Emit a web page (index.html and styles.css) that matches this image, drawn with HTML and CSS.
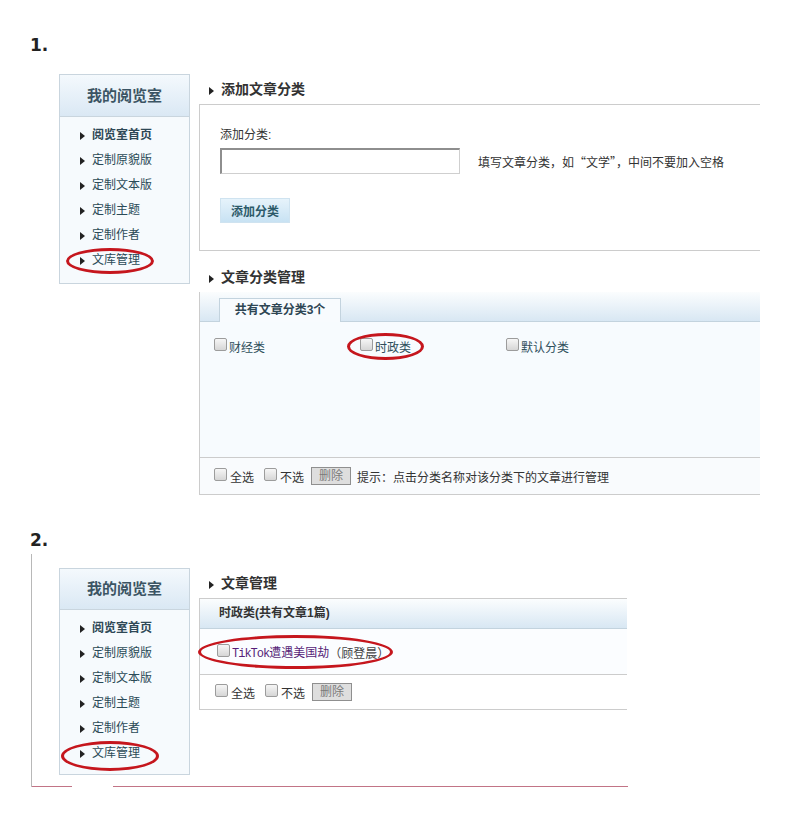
FILE: index.html
```html
<!DOCTYPE html>
<html lang="zh-CN">
<head>
    <meta charset="UTF-8">
    <meta name="viewport" content="width=device-width, initial-scale=1.0">
    <title>我的阅览室 - 文库管理</title>
    <link rel="stylesheet" href="styles.css">
</head>
<body>
<div class="page">

    <div class="step">1.</div>
    <div class="panel">
        <aside class="side">
            <div class="side-head">我的阅览室</div>
            <ul class="side-menu">
                <li class="current"><i class="arrow"></i>阅览室首页</li>
                <li><i class="arrow"></i>定制原貌版</li>
                <li><i class="arrow"></i>定制文本版</li>
                <li><i class="arrow"></i>定制主题</li>
                <li><i class="arrow"></i>定制作者</li>
                <li><i class="arrow"></i>文库管理<span class="ring ring-menu"></span></li>
            </ul>
        </aside>

        <div class="main main-wide">
            <h3 class="sec-title"><i class="arrow"></i>添加文章分类</h3>
            <div class="box add-box">
                <div class="field-label">添加分类:</div>
                <div class="field-row">
                    <input type="text" class="field-input">
                    <span class="field-hint">填写文章分类，如“文学”，中间不要加入空格</span>
                </div>
                <button class="add-button">添加分类</button>
            </div>

            <h3 class="sec-title sec-gap"><i class="arrow"></i>文章分类管理</h3>
            <div class="box cat-box">
                <div class="tab-bar">
                    <span class="tab">共有文章分类3个</span>
                </div>
                <div class="cat-list">
                    <label class="check-item"><input type="checkbox" class="check">财经类</label>
                    <label class="check-item"><input type="checkbox" class="check">时政类<span class="ring ring-cat"></span></label>
                    <label class="check-item"><input type="checkbox" class="check">默认分类</label>
                </div>
                <div class="box-foot">
                    <label class="foot-item"><input type="checkbox" class="check">全选</label>
                    <label class="foot-item"><input type="checkbox" class="check">不选</label>
                    <button class="del-button">删除</button>
                    <span class="foot-tip">提示：点击分类名称对该分类下的文章进行管理</span>
                </div>
            </div>
        </div>
    </div>

    <div class="step step-two">2.</div>
    <div class="frame">
        <div class="panel">
            <aside class="side">
                <div class="side-head">我的阅览室</div>
                <ul class="side-menu">
                    <li class="current"><i class="arrow"></i>阅览室首页</li>
                    <li><i class="arrow"></i>定制原貌版</li>
                    <li><i class="arrow"></i>定制文本版</li>
                    <li><i class="arrow"></i>定制主题</li>
                    <li><i class="arrow"></i>定制作者</li>
                    <li><i class="arrow"></i>文库管理<span class="ring ring-menu-2"></span></li>
                </ul>
            </aside>

            <div class="main main-narrow">
                <h3 class="sec-title"><i class="arrow"></i>文章管理</h3>
                <div class="box art-box">
                    <div class="art-head">时政类(共有文章1篇)</div>
                    <div class="art-row">
                        <input type="checkbox" class="check">
                        <a class="art-link"><span class="latin">TikTok</span>遭遇美国劫</a>
                        <span class="art-author">（顾登晨）</span>
                        <span class="ring ring-art"></span>
                    </div>
                    <div class="box-foot art-foot">
                        <label class="foot-item"><input type="checkbox" class="check">全选</label>
                        <label class="foot-item"><input type="checkbox" class="check">不选</label>
                        <button class="del-button">删除</button>
                    </div>
                </div>
            </div>
        </div>
        <div class="frame-line">
            <span class="seg seg-a"></span>
            <span class="seg seg-b"></span>
        </div>
    </div>

</div>
</body>
</html>
```

FILE: styles.css
```css
body {
    margin: 0;
    background-color: #fff;
    font-family: 'Liberation Sans', 'Noto Sans CJK SC', sans-serif;
    font-size: 12px;
    color: #333;
}

.page {
    padding: 35px 0 0 30px;
}

.step {
    font-family: 'DejaVu Sans', sans-serif;
    font-weight: bold;
    font-size: 17px;
    line-height: 21px;
    color: #222;
    margin-bottom: 18px;
}

.step-two {
    margin-top: 35px;
    margin-bottom: 3px;
}

.panel {
    display: flex;
    align-items: flex-start;
    margin-left: 29px;
}

/* sidebar */
.side {
    width: 131px;
    flex-shrink: 0;
    box-sizing: border-box;
    border: 1px solid #c9d5de;
    background-color: #f6fafd;
}

.side-head {
    height: 41px;
    line-height: 41px;
    text-align: center;
    font-size: 15px;
    font-weight: bold;
    color: #3b5463;
    background: linear-gradient(#f4f9fd, #dae8f4);
    border-bottom: 1px solid #c9d5de;
}

.side-menu {
    list-style: none;
    margin: 0;
    padding: 6px 0 10px;
}

.side-menu li {
    position: relative;
    height: 25px;
    line-height: 25px;
    padding-left: 20px;
    color: #2b4a57;
}

.side-menu li.current {
    font-weight: bold;
    color: #2e4856;
}

.arrow {
    display: inline-block;
    width: 0;
    height: 0;
    border-left: 5px solid #222;
    border-top: 4.5px solid transparent;
    border-bottom: 4.5px solid transparent;
    margin-right: 7px;
    vertical-align: -1px;
}

/* main column */
.main {
    margin-left: 9px;
}

.main-wide {
    width: 561px;
}

.main-narrow {
    width: 428px;
}

.sec-title {
    margin: 0;
    height: 30px;
    line-height: 30px;
    padding-left: 10px;
    font-size: 14px;
    font-weight: bold;
    color: #333;
}

.sec-gap {
    margin-top: 11px;
}

.box {
    box-sizing: border-box;
    border: 1px solid #cccccc;
    border-right: none;
}

.add-box {
    height: 147px;
    padding: 21px 20px 0;
    background-color: #fff;
}

.field-label {
    line-height: 18px;
    margin-bottom: 4px;
}

.field-row {
    display: flex;
    align-items: center;
}

.field-input {
    box-sizing: border-box;
    width: 240px;
    height: 26px;
    margin: 0;
    border: 1px solid #cfcfcf;
    border-top: 2px solid #8e8e8e;
    border-left: 2px solid #8e8e8e;
    background-color: #fff;
    outline: none;
}

.field-hint {
    margin-left: 18px;
    font-family: 'Noto Sans CJK SC', sans-serif;
}

.add-button {
    display: block;
    margin-top: 24px;
    width: 70px;
    height: 25px;
    padding: 0;
    border: 1px solid #cfe3f0;
    background: linear-gradient(#e6f3fb, #c8e2f3);
    font-family: inherit;
    font-size: 12px;
    font-weight: bold;
    color: #2c5a69;
}

/* category box */
.cat-box {
    border-top: none;
}

.tab-bar {
    display: flex;
    align-items: flex-end;
    box-sizing: border-box;
    height: 30px;
    padding-left: 19px;
    background: linear-gradient(#fbfdfe, #d8e7f3);
    border-bottom: 1px solid #c3d3de;
}

.tab {
    box-sizing: border-box;
    width: 122px;
    height: 24px;
    margin-bottom: -1px;
    line-height: 23px;
    text-align: center;
    font-weight: bold;
    color: #2e4654;
    background-color: #f8fbfe;
    border: 1px solid #c3d3de;
    border-bottom: none;
}

.cat-list {
    display: grid;
    grid-template-columns: 146px 146px 146px;
    align-content: start;
    height: 135px;
    box-sizing: border-box;
    padding: 15px 0 0 14px;
    background-color: #f7fbfe;
}

.check-item {
    position: relative;
    display: flex;
    align-items: center;
    height: 18px;
    color: #2f4f5c;
}

.check {
    appearance: none;
    -webkit-appearance: none;
    box-sizing: border-box;
    width: 13px;
    height: 13px;
    margin: -3px 2px 0 0;
    border: 1px solid #9c9c9c;
    border-radius: 2px;
    background: linear-gradient(#f6f6f6, #d6d6d6);
    flex-shrink: 0;
}

.box-foot {
    display: flex;
    align-items: center;
    box-sizing: border-box;
    height: 37px;
    padding-left: 14px;
    border-top: 1px solid #cccccc;
    background-color: #f9fbfd;
}

.foot-item {
    display: flex;
    align-items: center;
    margin-right: 10px;
    color: #333;
}

.foot-item .check {
    margin-right: 3px;
}

.del-button {
    box-sizing: border-box;
    width: 40px;
    height: 18px;
    padding: 0;
    margin-left: -3px;
    border: 1px solid #8f8f8f;
    background-color: #dedede;
    font-family: inherit;
    font-size: 12px;
    line-height: 16px;
    color: #7a7a7a;
}

.foot-tip {
    margin-left: 6px;
}

/* article box */
.art-head {
    box-sizing: border-box;
    height: 30px;
    line-height: 29px;
    padding-left: 19px;
    font-weight: bold;
    color: #333;
    background: linear-gradient(#fbfdfe, #d8e7f3);
    border-bottom: 1px solid #c3d3de;
}

.art-row {
    position: relative;
    display: flex;
    align-items: center;
    box-sizing: border-box;
    height: 45px;
    padding: 1px 0 0 17px;
    background-color: #fbfdff;
}

.art-row .check {
    margin-right: 2px;
}

.art-link {
    color: #561d78;
}

.latin {
    font-family: 'Liberation Mono', monospace;
    letter-spacing: -1px;
}

.art-author {
    color: #444;
}

.art-foot {
    height: 35px;
    padding-left: 15px;
    background-color: #fff;
}

/* section 2 frame */
.frame {
    margin-left: 1px;
    padding-top: 14px;
    border-left: 1px solid #b8b8b8;
}

.frame .panel {
    margin-left: 27px;
}

.frame .side-head {
    height: 40px;
    line-height: 40px;
}

.frame .side-menu {
    padding-bottom: 8px;
}

.frame-line {
    display: flex;
    margin-top: 11px;
    height: 1px;
}

.seg {
    height: 1px;
    background-color: #c27486;
}

.seg-a {
    width: 40px;
}

.seg-b {
    width: 515px;
    margin-left: 41px;
}

/* red hand-drawn marks */
.ring {
    position: absolute;
    box-sizing: border-box;
    border: 3px solid #c5161d;
    border-radius: 50%;
    pointer-events: none;
}

.ring-menu {
    left: 6px;
    top: 0;
    width: 88px;
    height: 26px;
}

.ring-menu-2 {
    left: 1px;
    top: 0;
    width: 98px;
    height: 30px;
}

.ring-cat {
    left: -13px;
    top: -4px;
    width: 77px;
    height: 27px;
}

.ring-art {
    left: -2px;
    top: 6px;
    width: 195px;
    height: 34px;
}
```
